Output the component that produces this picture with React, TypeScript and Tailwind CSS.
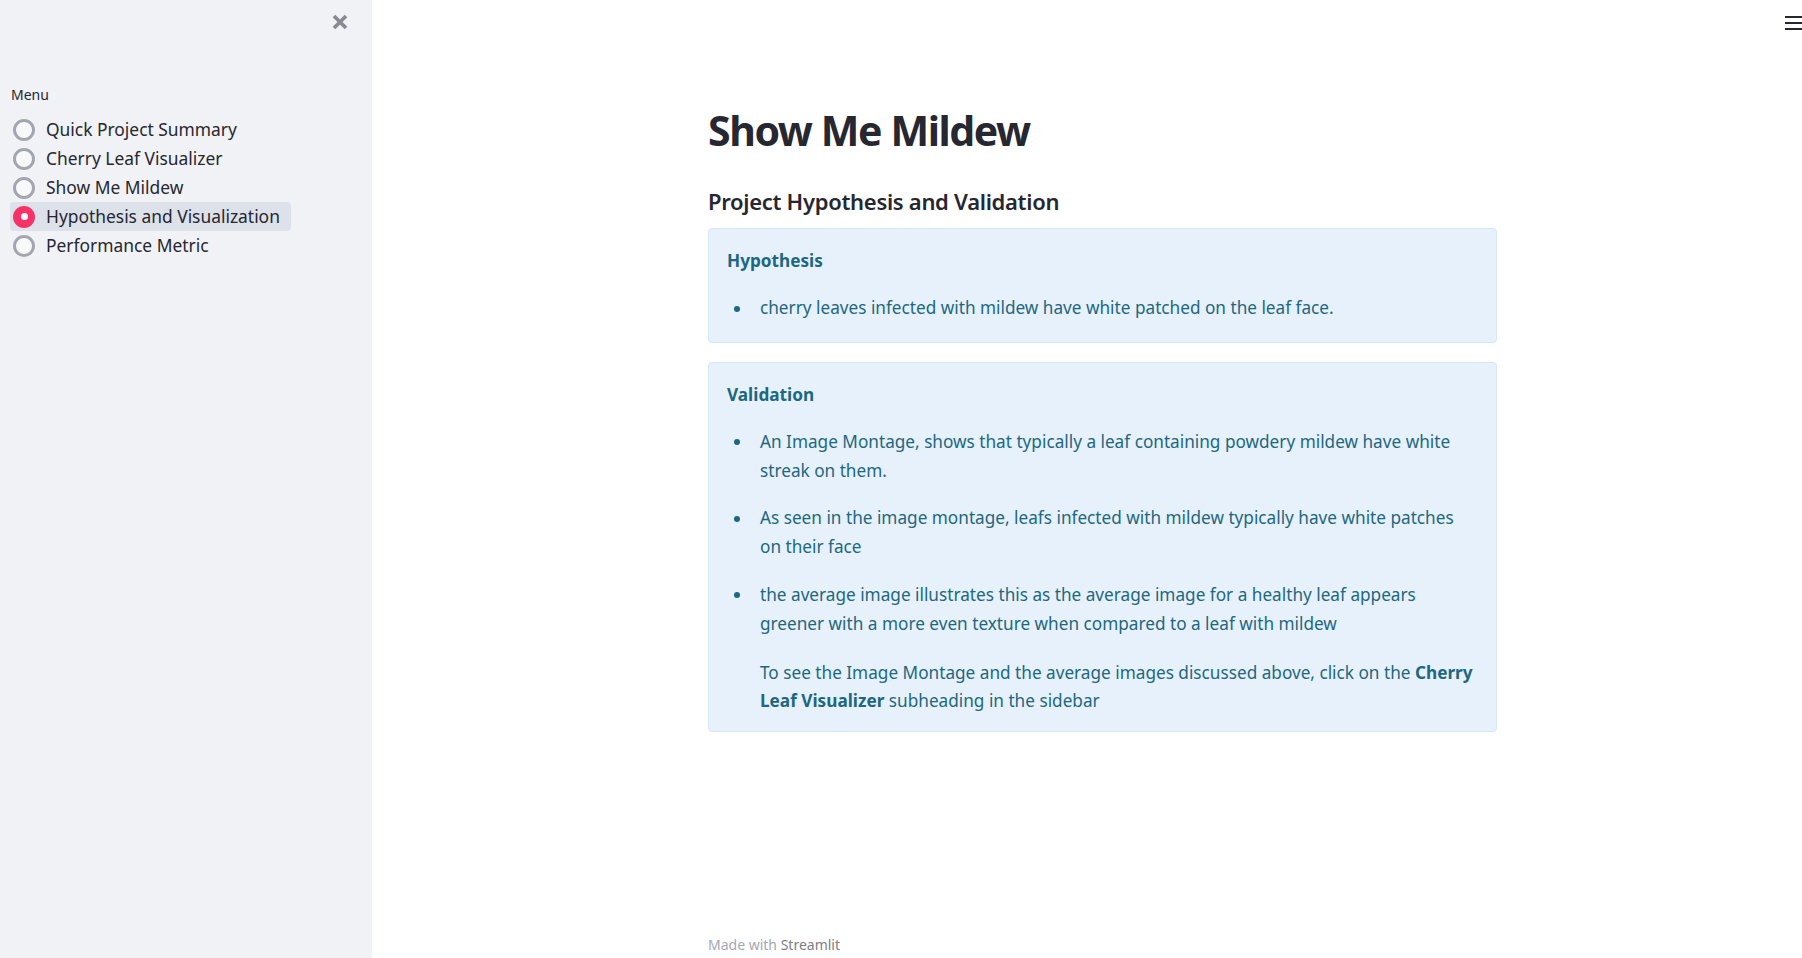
import React from "react";

const items = [
  "Quick Project Summary",
  "Cherry Leaf Visualizer",
  "Show Me Mildew",
  "Hypothesis and Visualization",
  "Performance Metric",
];

function Radio({ checked }: { checked: boolean }) {
  if (checked) {
    return (
      <span className="flex h-[22px] w-[22px] shrink-0 items-center justify-center rounded-full bg-[#f63366]">
        <span className="h-[7px] w-[7px] rounded-full bg-white" />
      </span>
    );
  }
  return (
    <span className="h-[22px] w-[22px] shrink-0 rounded-full border-[3px] border-[#a3a6ae] bg-[#f7f8fa]" />
  );
}

function Bullet({ children }: { children: React.ReactNode }) {
  return (
    <li className="flex">
      <span className="flex h-[28.8px] w-[33px] shrink-0 items-center pl-[7px]">
        <span className="h-[6px] w-[6px] rounded-full bg-[#1e6780]" />
      </span>
      <div className="flex-1">{children}</div>
    </li>
  );
}

export default function App() {
  return (
    <div
      className="flex h-screen w-full overflow-hidden bg-white text-[#262730]"
      style={{ fontFamily: '"Noto Sans", "Open Sans", sans-serif' }}
    >
      {/* Sidebar */}
      <aside className="relative flex h-full w-[372px] shrink-0 flex-col bg-[#f0f2f6]">
        <div className="flex justify-end pr-[24px] pt-[14px]">
          <svg width="16" height="16" viewBox="0 0 16 16">
            <path
              d="M2 2 L14 14 M14 2 L2 14"
              stroke="#8a8b92"
              strokeWidth="3.8"
              strokeLinecap="butt"
            />
          </svg>
        </div>
        <div className="pl-[11px] pt-[55px]">
          <div className="text-[14px] leading-[20px] text-[#262730]">Menu</div>
          <div className="mt-[10px] flex flex-col items-start">
            {items.map((it) => {
              const sel = it === "Hypothesis and Visualization";
              return (
                <div
                  key={it}
                  className={
                    "-ml-[1px] flex h-[29px] items-center gap-[11px] rounded-[4px] pl-[3px] pr-[11px] " +
                    (sel ? "bg-[#dde1ea]" : "")
                  }
                >
                  <Radio checked={sel} />
                  <span className="text-[17.4px] leading-[29px] text-[#262730]">{it}</span>
                </div>
              );
            })}
          </div>
        </div>
      </aside>

      {/* Main */}
      <main className="relative flex h-full flex-1 flex-col">
        <div className="absolute right-0 top-[16px] flex w-[17px] flex-col gap-[4px]">
          <span className="h-[2px] w-full bg-[#262730]" />
          <span className="h-[2px] w-full bg-[#262730]" />
          <span className="h-[2px] w-full bg-[#262730]" />
        </div>

        <div className="flex-1 pl-[336px] pt-[104px]">
          <div className="w-[789px]">
            <h1 className="text-[41px] font-bold leading-[52.8px] tracking-[-1.4px] text-[#262730]">
              Show Me Mildew
            </h1>
            <h3 className="mt-[31px] text-[22px] font-semibold leading-[27.6px] tracking-[-0.3px] text-[#262730]">
              Project Hypothesis and Validation
            </h3>

            <div className="mt-[13px] rounded-[4px] border border-[#d4e6f8] bg-[#e6f1fc] px-[18px] pb-[19px] pt-[18px] text-[17.2px] leading-[28.8px] text-[#1e6780]">
              <p className="mb-[18px] font-bold">Hypothesis</p>
              <ul>
                <Bullet>cherry leaves infected with mildew have white patched on the leaf face.</Bullet>
              </ul>
            </div>

            <div className="mt-[19px] rounded-[4px] border border-[#d4e6f8] bg-[#e6f1fc] px-[18px] pb-[15px] pt-[18px] text-[17.2px] leading-[28.8px] text-[#1e6780]">
              <p className="mb-[18px] font-bold">Validation</p>
              <ul className="flex flex-col gap-[19px]">
                <Bullet>
                  An Image Montage, shows that typically a leaf containing powdery mildew have white streak on them.
                </Bullet>
                <Bullet>
                  As seen in the image montage, leafs infected with mildew typically have white patches on their face
                </Bullet>
                <Bullet>
                  <p className="mb-[20px]">
                    the average image illustrates this as the average image for a healthy leaf appears greener with a more
                    even texture when compared to a leaf with mildew
                  </p>
                  <p>
                    <span className="whitespace-nowrap">
                      To see the Image Montage and the average images discussed above, click on the{" "}
                      <strong className="font-bold">Cherry</strong>
                    </span>
                    <br />
                    <strong className="font-bold">Leaf Visualizer</strong> subheading in the sidebar
                  </p>
                </Bullet>
              </ul>
            </div>
          </div>
        </div>

        <footer className="pb-[3px] pl-[336px] text-[14px] leading-[20px]">
          <span className="text-[#a5a8b4]">Made with </span>
          <span className="text-[#7c7e88]">Streamlit</span>
        </footer>
      </main>
    </div>
  );
}
